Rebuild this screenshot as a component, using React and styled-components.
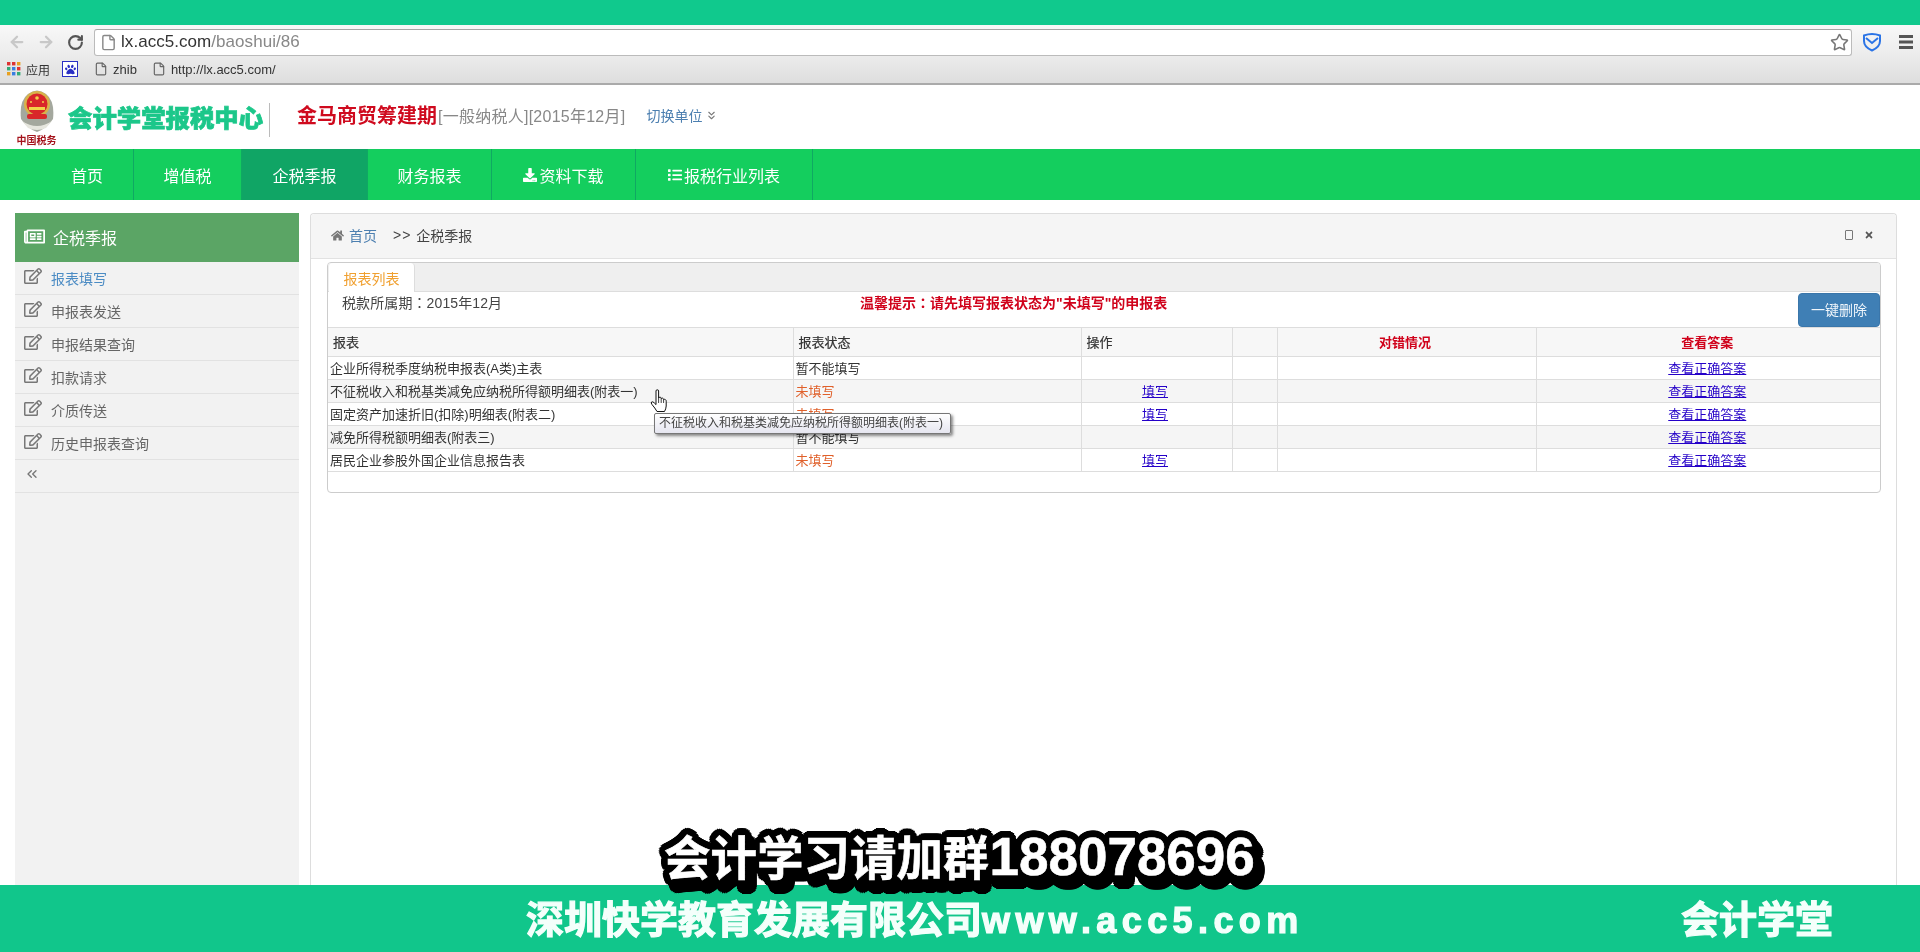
import React from 'react';
import styled, { createGlobalStyle } from 'styled-components';
import { ArrowLeft, ArrowRight, RotateCw, File, Star, ChevronsLeft, ChevronsDown } from 'lucide-react';
import { FaRegEdit, FaRegNewspaper, FaHome, FaDownload, FaList, FaTimes, FaPaw } from 'react-icons/fa';

const SANS = `"Liberation Sans", "Noto Sans CJK SC", sans-serif`;

const Global = createGlobalStyle`
  html, body { margin: 0; padding: 0; background: #fff; }
  body { font-family: ${SANS}; font-size: 14px; color: #333; }
  * { box-sizing: border-box; }
`;

const Page = styled.div`
  position: relative; width: 1920px; height: 952px; overflow: hidden;
  display: flex; flex-direction: column; background: #fff; filter: blur(0.35px);
`;
const TopBand = styled.div`height: 25px; background: #10c98d; flex: none;`;
const Chrome = styled.div`
  flex: none; height: 60px; border-bottom: 2px solid #aaa;
  background: linear-gradient(#f8f8f8 0, #ececec 30px, #dedede 58px);
  display: flex; flex-direction: column;
`;
const UrlRow = styled.div`height: 30px; flex: none; display: flex; align-items: center; padding-top: 4px;`;
const NavButton = styled.span`
  width: ${p => p.$w}px; flex: none; display: flex; justify-content: center;
  color: ${p => p.$color};
`;
const Address = styled.div`
  flex: none; width: 1758px; height: 27px; margin-left: 2px; background: #fff;
  border: 1px solid #bbb; border-top-color: #a5a5a5; border-radius: 3px;
  display: flex; align-items: center; padding: 0 2px 0 5px;
  font-size: 17px; color: #333;
`;
const UrlHost = styled.span`margin-left: 4px; color: #333; letter-spacing: .05px;`;
const UrlPath = styled.span`color: #888; flex: 1; letter-spacing: .05px;`;
const ExtSlot = styled.span`flex: none; display: flex; justify-content: center; width: ${p => p.$w}px;`;
const BookRow = styled.div`
  flex: 1; display: flex; align-items: center; padding-left: 7px;
  font-size: 13px; color: #333;
`;
const Book = styled.span`display: inline-flex; align-items: center; gap: 5px; margin-right: ${p => p.$mr}px;`;
const AppsLabel = styled.span`font-size: 12px;`;
const PawBox = styled.span`
  width: 16px; height: 16px; background: #fff; border: 1px solid #2a2fc4; color: #2a2fc4;
  display: inline-flex; align-items: center; justify-content: center; font-size: 11px;
`;

const Header = styled.header`flex: none; height: 64px; display: flex; align-items: center; padding-left: 17px;`;
const Logo = styled.div`width: 39px; flex: none; display: flex; flex-direction: column; align-items: center; margin-top: 1px;`;
const LogoScript = styled.span`font-size: 10px; line-height: 12px; font-weight: 700; color: #a5141c; white-space: nowrap; font-family: "Noto Sans CJK SC", sans-serif;`;
const Title = styled.div`
  margin-left: 12px; font-size: 24.4px; font-weight: 900; color: #1cc78a; white-space: nowrap;
  -webkit-text-stroke: 0.7px #1cc78a; width: 202px; height: 34px; line-height: 32px;
  border-right: 1px solid #bbb; margin-top: 6px; flex: none;
`;
const Company = styled.span`margin-left: 27px; font-size: 20px; font-weight: 700; color: #cf0a1e; white-space: nowrap; margin-top: -5px;`;
const TaxInfo = styled.span`font-size: 16px; letter-spacing: .25px; color: #888; white-space: nowrap; margin-top: -5px; margin-left: 1px;`;
const Switch = styled.a`
  margin-left: 21px; font-size: 14px; color: #4c7fb0; display: inline-flex; align-items: center;
  gap: 3px; margin-top: -4px; white-space: nowrap;
  svg { color: #777; }
`;

const Nav = styled.nav`flex: none; height: 51px; background: #14ce5e; display: flex;`;
const NavItem = styled.a`
  width: ${p => p.$w}px; padding-left: ${p => p.$pl || 0}px; flex: none; height: 100%;
  display: flex; align-items: center; justify-content: center; gap: 2px;
  font-size: 16px; color: #fff; border-right: 1px solid #10a863;
  background: ${p => (p.$active ? '#10a565' : 'transparent')};
`;

const Body = styled.div`flex: 1; min-height: 0; display: flex; padding: 13px 23px 0 15px; align-items: stretch; gap: 11px;`;
const Sidebar = styled.aside`width: 284px; flex: none; background: #f2f2f2;`;
const SideHead = styled.div`
  height: 49px; background: #5ba565; color: #fff; font-size: 16px; padding-bottom: 2px;
  display: flex; align-items: center; gap: 8px; padding-left: 9px;
`;
const SideItem = styled.a`
  height: 33px; display: flex; align-items: center; gap: 9px; padding: 0 0 0 9px;
  border-bottom: 1px solid #e2e2e2; font-size: 14px; color: ${p => (p.$active ? '#4c8cc4' : '#666')};
  svg { color: #777; font-size: 18px; margin-top: -4px; flex: none; }
`;
const Main = styled.main`
  flex: 1; min-width: 0; border: 1px solid #ddd; border-bottom: 0; border-radius: 4px 4px 0 0;
  background: #fff; display: flex; flex-direction: column;
`;
const Crumbs = styled.div`
  height: 45px; flex: none; background: #f5f5f5; border-bottom: 1px solid #e2e2e2;
  display: flex; align-items: center; padding: 0 22px 2px 20px; font-size: 14px; color: #444;
  border-radius: 4px 4px 0 0;
`;
const HomeLink = styled.a`color: #4c7fb0; margin-left: 5px;`;
const Sep = styled.span`margin: 0 5px 0 16px; letter-spacing: 1px;`;
const CrumbTools = styled.span`margin-left: auto; display: flex; align-items: center; gap: 11px; color: #555;`;
const WindowBox = styled.span`width: 8px; height: 10px; border: 1px solid #777; border-radius: 1px; display: block;`;

const Card = styled.section`
  margin: 3px 15px 0 16px; height: 231px; border: 1px solid #ccc; border-radius: 4px; flex: none;
  display: flex; flex-direction: column; overflow: hidden;
`;
const TabStrip = styled.div`height: 29px; flex: none; background: #efefef; border-bottom: 1px solid #ddd; display: flex; padding-left: 1px;`;
const Tab = styled.div`
  width: 86px; height: 29px; background: #fff; border-radius: 4px 4px 0 0; border-right: 1px solid #ddd;
  color: #f0a030; font-size: 14px; display: flex; align-items: center; justify-content: center;
`;
const InfoRow = styled.div`height: 35px; flex: none; display: flex; align-items: flex-start; padding: 0 0 0 14px; font-size: 14px; line-height: 20px;`;
const Period = styled.span`width: 518px; flex: none; color: #444; letter-spacing: .1px;`;
const Colon = styled.span`font-family: "Noto Sans CJK TC", sans-serif;`;
const Warning = styled.span`font-weight: 700; color: #d0021b; flex: 1; white-space: nowrap;`;
const OneKey = styled.button`
  flex: none; width: 82px; height: 34px; background: #3f7fb5; color: #f0f6fb; border: 1px solid #3a76aa;
  border-radius: 4px; font: 14px ${SANS}; padding: 0 0 2px; margin-top: 1px;
`;
const Table = styled.table`width: 1553px; table-layout: fixed; border-collapse: collapse; font-size: 13px;`;
const Th = styled.th`
  height: 29px; padding: 0 ${p => (p.$center ? 3 : 0)}px 2px ${p => (p.$center ? 0 : 5)}px; background: #f7f7f7; border: 1px solid #ddd;
  border-left: 0; text-align: ${p => (p.$center ? 'center' : 'left')}; font-weight: ${p => (p.$red ? 700 : 400)};
  color: ${p => (p.$red ? '#d0021b' : '#333')}; -webkit-text-stroke: ${p => (p.$red ? 0 : 0.2)}px #333;
  &:last-child { border-right: 0; }
`;
const Td = styled.td`
  height: 23px; padding: 0 ${p => (p.$center ? 3 : 0)}px 2px ${p => (p.$center ? 0 : 2)}px; border: 1px solid #ddd; border-left: 0; white-space: nowrap;
  text-align: ${p => (p.$center ? 'center' : 'left')}; color: ${p => p.$color || '#333'};
  &:last-child { border-right: 0; }
`;
const Tr = styled.tr`background: ${p => (p.$alt ? '#f5f5f5' : '#fff')};`;
const RowLink = styled.a`color: #2400c8; text-decoration: underline;`;

const Footer = styled.footer`
  flex: none; height: 67px; background: #11c68b; color: #f4fffb; display: flex; align-items: center;
  justify-content: space-between; padding: 0 87px 4px 526px; font-weight: 700; font-size: 38px; white-space: nowrap;
  -webkit-text-stroke: 1.2px #f4fffb;
`;
const FootCompany = styled.span`display: inline-flex; align-items: baseline;`;
const FootUrl = styled.span`font-size: 36px; letter-spacing: 5.4px;`;
const outline = [];
for (let a = 0; a < 24; a++) {
  const t = (a / 24) * Math.PI * 2;
  outline.push(`${(Math.cos(t) * 7).toFixed(1)}px ${(Math.sin(t) * 7).toFixed(1)}px 0 #000`);
  outline.push(`${(Math.cos(t) * 7 + 5).toFixed(1)}px ${(Math.sin(t) * 7 + 7).toFixed(1)}px 0 #000`);
}
const Caption = styled.div`
  position: absolute; left: 664px; top: 827px; font-size: 46.5px; line-height: 60px; font-weight: 700; color: #fff;
  white-space: nowrap; text-shadow: ${outline.join(',')}; -webkit-text-stroke: 0.6px #fff;
`;
const CaptionDigits = styled.span`font-size: 53px; line-height: 60px;`;
const Tip = styled.div`
  position: absolute; left: 654px; top: 413px; width: 297px; height: 21px; border: 1px solid #777; border-radius: 2px;
  background: linear-gradient(#fff, #e6e6f0); box-shadow: 2px 2px 3px rgba(0,0,0,.45);
  font-size: 12px; line-height: 19px; color: #444; padding-left: 4px; white-space: nowrap;
`;
const Cursor = styled.svg`position: absolute; left: 650px; top: 389px;`;

const rows = [
  { name: '企业所得税季度纳税申报表(A类)主表', status: '暂不能填写' },
  { name: '不征税收入和税基类减免应纳税所得额明细表(附表一)', status: '未填写', fill: true },
  { name: '固定资产加速折旧(扣除)明细表(附表二)', status: '未填写', fill: true },
  { name: '减免所得税额明细表(附表三)', status: '暂不能填写' },
  { name: '居民企业参股外国企业信息报告表', status: '未填写', fill: true },
];
const side = ['报表填写', '申报表发送', '申报结果查询', '扣款请求', '介质传送', '历史申报表查询'];

const Apps = () => (
  <svg width="14" height="14" viewBox="0 0 14 14">
    {[['#d33', '#d33', '#e8a020'], ['#3a7', '#3a7de0', '#d33'], ['#e8a020', '#3a7de0', '#3a7']].map((r, y) =>
      r.map((c, x) => <rect key={`${x}${y}`} x={x * 5} y={y * 5} width="3.4" height="3.4" fill={c} />))}
  </svg>
);
const Shield = () => (
  <svg width="20" height="20" viewBox="0 0 20 20" fill="none" stroke="#2b74e6" strokeWidth="2">
    <path d="M2 3.5 Q10 .5 18 3.5 V9 Q18 15 10 18.5 Q2 15 2 9 Z" />
    <path d="M4 6 L10 11 L16 6" />
  </svg>
);
const Burger = () => (
  <svg width="14" height="14" viewBox="0 0 14 14" fill="#555">
    <rect y="0" width="14" height="3" /><rect y="5.5" width="14" height="3" /><rect y="11" width="14" height="3" />
  </svg>
);
const Emblem = () => (
  <svg width="38" height="45" viewBox="0 0 38 45">
    <path d="M3 30 Q1 12 10 5 Q19 -2 28 5 Q37 12 35 30 Q28 40 19 43 Q10 40 3 30Z" fill="#a4a89e" />
    <circle cx="19" cy="15" r="13" fill="#d8b24a" />
    <circle cx="19" cy="15" r="10.5" fill="#d9262a" />
    <circle cx="19" cy="9" r="1.8" fill="#f2d24a" />
    <circle cx="13" cy="13" r="1" fill="#f2d24a" /><circle cx="25" cy="13" r="1" fill="#f2d24a" />
    <rect x="11" y="18" width="16" height="3" fill="#f2d24a" />
    <rect x="9" y="25" width="20" height="5" rx="2" fill="#d9262a" />
    <path d="M4 32 Q19 42 34 32 L28 39 Q19 43 10 39Z" fill="#e6e6de" />
  </svg>
);

export default function App() {
  return (
    <Page>
      <Global />
      <TopBand />
      <Chrome>
        <UrlRow>
          <NavButton $w={34} $color="#c8c8c8"><ArrowLeft size={18} strokeWidth={3} /></NavButton>
          <NavButton $w={24} $color="#c8c8c8"><ArrowRight size={18} strokeWidth={3} /></NavButton>
          <NavButton $w={34} $color="#555"><RotateCw size={17} strokeWidth={3} /></NavButton>
          <Address>
            <File size={17} color="#888" />
            <UrlHost>lx.acc5.com</UrlHost>
            <UrlPath>/baoshui/86</UrlPath>
            <Star size={19} color="#777" />
          </Address>
          <ExtSlot $w={40}><Shield /></ExtSlot>
          <ExtSlot $w={28}><Burger /></ExtSlot>
        </UrlRow>
        <BookRow>
          <Book $mr={12}><Apps /> <AppsLabel>应用</AppsLabel></Book>
          <Book $mr={16}><PawBox><FaPaw /></PawBox></Book>
          <Book $mr={15}><File size={14} color="#666" /> zhib</Book>
          <Book><File size={14} color="#666" /> http://lx.acc5.com/</Book>
        </BookRow>
      </Chrome>
      <Header>
        <Logo>
          <Emblem />
          <LogoScript>中国税务</LogoScript>
        </Logo>
        <Title>会计学堂报税中心</Title>
        <Company>金马商贸筹建期</Company>
        <TaxInfo>[一般纳税人][2015年12月]</TaxInfo>
        <Switch>切换单位 <ChevronsDown size={13} strokeWidth={2} /></Switch>
      </Header>
      <Nav>
        <NavItem $w={134} $pl={41}>首页</NavItem>
        <NavItem $w={108}>增值税</NavItem>
        <NavItem $w={126} $active>企税季报</NavItem>
        <NavItem $w={124}>财务报表</NavItem>
        <NavItem $w={144}><FaDownload size={14} />资料下载</NavItem>
        <NavItem $w={177}><FaList size={14} />报税行业列表</NavItem>
      </Nav>
      <Body>
        <Sidebar>
          <SideHead><FaRegNewspaper size={21} />企税季报</SideHead>
          {side.map((s, i) => (
            <SideItem key={s} $active={i === 0}><FaRegEdit />{s}</SideItem>
          ))}
          <SideItem><ChevronsLeft size={16} strokeWidth={2} /></SideItem>
        </Sidebar>
        <Main>
          <Crumbs>
            <FaHome size={13} color="#777" />
            <HomeLink>首页</HomeLink>
            <Sep>&gt;&gt;</Sep>
            企税季报
            <CrumbTools><WindowBox /><FaTimes size={10} /></CrumbTools>
          </Crumbs>
          <Card>
            <TabStrip><Tab>报表列表</Tab></TabStrip>
            <InfoRow>
              <Period>税款所属期<Colon>：</Colon>2015年12月</Period>
              <Warning>温馨提示<Colon>：</Colon>请先填写报表状态为"未填写"的申报表</Warning>
              <OneKey>一键删除</OneKey>
            </InfoRow>
            <Table>
              <colgroup>
                <col width="465" /><col width="288" /><col width="151" /><col width="45" /><col width="259" /><col width="345" />
              </colgroup>
              <thead>
                <tr>
                  <Th>报表</Th><Th>报表状态</Th><Th>操作</Th><Th />
                  <Th $center $red>对错情况</Th><Th $center $red>查看答案</Th>
                </tr>
              </thead>
              <tbody>
                {rows.map((r, i) => (
                  <Tr key={r.name} $alt={i % 2 === 1}>
                    <Td>{r.name}</Td>
                    <Td $color={r.fill ? '#e0602a' : undefined}>{r.status}</Td>
                    <Td $center>{r.fill && <RowLink>填写</RowLink>}</Td>
                    <Td />
                    <Td />
                    <Td $center><RowLink>查看正确答案</RowLink></Td>
                  </Tr>
                ))}
              </tbody>
            </Table>
          </Card>
        </Main>
      </Body>
      <Footer>
        <FootCompany>深圳快学教育发展有限公司<FootUrl>www.acc5.com</FootUrl></FootCompany>
        <span>会计学堂</span>
      </Footer>
      <Caption>会计学习请加群<CaptionDigits>188078696</CaptionDigits></Caption>
      <Tip>不征税收入和税基类减免应纳税所得额明细表(附表一)</Tip>
      <Cursor width="18" height="24" viewBox="0 0 18 24">
        <path d="M6 2 Q6 .8 7.3 .8 Q8.6 .8 8.6 2 V9 Q9 8 10.2 8.2 Q11.2 8.4 11.2 9.6 Q11.8 8.8 12.8 9.2 Q13.6 9.6 13.6 10.6 Q14.4 10 15.3 10.5 Q16.2 11 16.2 12.2 V17 Q16 20 14.5 22.5 H7 Q5 19 2 15.5 Q.6 13.8 1.6 13 Q2.8 12.2 4.4 14 L6 15.6 Z" fill="#fff" stroke="#111" strokeWidth="1" />
        <path d="M8.6 9V14M11.2 9.6V14M13.6 10.6V14" stroke="#111" strokeWidth=".8" />
      </Cursor>
    </Page>
  );
}
